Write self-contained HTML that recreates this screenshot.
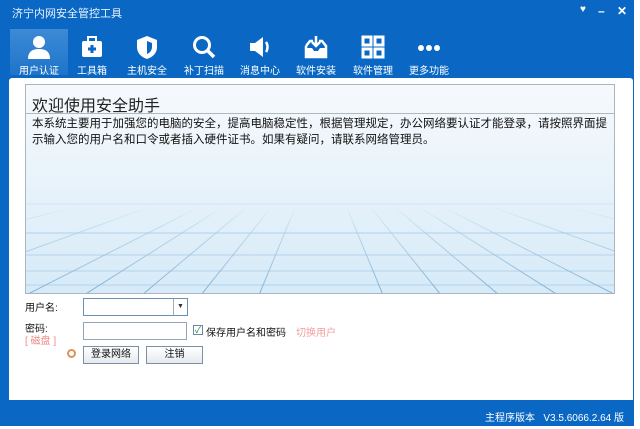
<!DOCTYPE html>
<html><head><meta charset="utf-8"><style>
*{margin:0;padding:0;box-sizing:border-box}
body{width:640px;height:429px;background:#fff;position:relative;overflow:hidden;font-family:"Liberation Sans","Noto Sans CJK SC",sans-serif}
#win{position:absolute;left:0;top:0;width:634px;height:426px;background:#0a68c4}
.title{position:absolute;left:12px;top:5px;color:#e8f2ff;font-size:11px}
.ctl{position:absolute;top:4px;color:#fff;font-size:12px;font-weight:bold}
.tb{position:absolute;top:29px;width:58px;height:46px;text-align:center;color:#fff;font-size:10px}
.tb.act{background:linear-gradient(#3d8ad6,#1e74c9)}
.tb svg{display:block;margin:5px auto 2px;width:26px;height:26px}
#panel{position:absolute;left:9px;top:78px;width:624px;height:322px;background:#fff;border-radius:3px 3px 0 0}
#box{position:absolute;left:25px;top:84px;width:590px;height:210px;border:1px solid #a9b6c4;background:linear-gradient(#f6f9fc 0%,#eaf4fb 40%,#d6eaf8 100%);overflow:hidden}
#box h1{position:absolute;left:6px;top:7px;font-size:16px;font-weight:normal;color:#222;font-family:"Noto Sans CJK SC",sans-serif}
#box .ul{position:absolute;left:0;right:0;top:28px;border-top:1px solid #b0b8c0}
#box p{position:absolute;left:6px;top:30px;width:584px;font-size:11.5px;line-height:16px;color:#111;font-family:"Noto Sans CJK SC",sans-serif;white-space:nowrap}
.lbl{position:absolute;font-size:10px;color:#111}
.inp{position:absolute;background:#fff;border:1px solid #8fa5bd}
.btn{position:absolute;background:linear-gradient(#fff,#e6e9ee);border:1px solid #7f8fa3;font-size:10px;text-align:center;line-height:15px;color:#111}
#status{position:absolute;right:10px;top:409px;color:#fff;font-size:10px}
</style></head><body>
<div id="win">
<div class="title">济宁内网安全管控工具</div>
<div class="ctl" style="left:580px;font-size:10px">♥</div>
<div class="ctl" style="left:598px">–</div>
<div class="ctl" style="left:617px">✕</div>

<div class="tb act" style="left:10px"><svg viewBox="0 0 26 26"><circle cx="13" cy="8" r="6" fill="#fff"/><path d="M2 25c0-8 5-10 11-10s11 2 11 10z" fill="#fff"/></svg>用户认证</div>
<div class="tb" style="left:63px"><svg viewBox="0 0 26 26"><rect x="3" y="7" width="20" height="16" rx="2" fill="#fff"/><rect x="9" y="3" width="8" height="5" fill="none" stroke="#fff" stroke-width="2"/><path d="M13 11v8M9 15h8" stroke="#0a68c4" stroke-width="3"/></svg>工具箱</div>
<div class="tb" style="left:118px"><svg viewBox="0 0 26 26"><path d="M13 2l10 4v7c0 6-4 10-10 12C7 23 3 19 3 13V6z" fill="#fff"/><path d="M13 7l5 2v4c0 3-2 6-5 7z" fill="#0a68c4"/></svg>主机安全</div>
<div class="tb" style="left:175px"><svg viewBox="0 0 26 26"><circle cx="11" cy="11" r="7.5" fill="none" stroke="#fff" stroke-width="3"/><path d="M16 16l7 7" stroke="#fff" stroke-width="3.5"/></svg>补丁扫描</div>
<div class="tb" style="left:231px"><svg viewBox="0 0 26 26"><path d="M3 9h5l8-6v20l-8-6H3z" fill="#fff"/><path d="M19 8c2 3 2 7 0 10" stroke="#fff" stroke-width="2.5" fill="none"/></svg>消息中心</div>
<div class="tb" style="left:287px"><svg viewBox="0 0 26 26"><path d="M3 12v11h20V12l-4-5h-3M10 7H7l-4 5" fill="none" stroke="#fff" stroke-width="2.5"/><path d="M3 14h6l2 3h4l2-3h6v9H3z" fill="#fff"/><path d="M13 2v10M9 8l4 4 4-4" stroke="#fff" stroke-width="2.5" fill="none"/></svg>软件安装</div>
<div class="tb" style="left:344px"><svg viewBox="0 0 26 26"><g fill="none" stroke="#fff" stroke-width="3"><rect x="3" y="3" width="8" height="8"/><rect x="15" y="3" width="8" height="8"/><rect x="3" y="15" width="8" height="8"/><rect x="15" y="15" width="8" height="8"/></g></svg>软件管理</div>
<div class="tb" style="left:400px"><svg viewBox="0 0 26 26"><circle cx="5" cy="14" r="3" fill="#fff"/><circle cx="13" cy="14" r="3" fill="#fff"/><circle cx="21" cy="14" r="3" fill="#fff"/></svg>更多功能</div>

<div id="panel"></div>
<div id="box">
<svg width="590" height="210" style="position:absolute;left:0;top:0" viewBox="0 0 590 210">
<defs><linearGradient id="f" x1="0" y1="0" x2="0" y2="1"><stop offset="0.4" stop-color="#9ec4de" stop-opacity="0"/><stop offset="0.6" stop-color="#9ec4de" stop-opacity="0.6"/><stop offset="1" stop-color="#7fb0d4" stop-opacity="1"/></linearGradient></defs>
<g stroke="#b3d2ea" stroke-width="1">
<line x1="0" y1="119" x2="590" y2="119" stroke="#cfe2f1"/><line x1="0" y1="148" x2="590" y2="148"/><line x1="0" y1="170" x2="590" y2="170"/><line x1="0" y1="186" x2="590" y2="186"/><line x1="0" y1="200" x2="590" y2="200"/>
</g>
<g stroke="url(#f)" stroke-width="1" fill="none">
<line x1="295" y1="60" x2="0" y2="210"/><line x1="295" y1="60" x2="58" y2="210"/><line x1="295" y1="60" x2="116" y2="210"/><line x1="295" y1="60" x2="175" y2="210"/><line x1="295" y1="60" x2="233" y2="210"/><line x1="295" y1="60" x2="-120" y2="210"/><line x1="295" y1="60" x2="-300" y2="210"/>
<line x1="295" y1="60" x2="295" y2="210"/>
<line x1="295" y1="60" x2="357" y2="210"/><line x1="295" y1="60" x2="415" y2="210"/><line x1="295" y1="60" x2="473" y2="210"/><line x1="295" y1="60" x2="532" y2="210"/><line x1="295" y1="60" x2="590" y2="210"/><line x1="295" y1="60" x2="710" y2="210"/><line x1="295" y1="60" x2="890" y2="210"/>
</g></svg>
<h1>欢迎使用安全助手</h1><div class="ul"></div>
<p>本系统主要用于加强您的电脑的安全，提高电脑稳定性，根据管理规定，办公网络要认证才能登录，请按照界面提<br>示输入您的用户名和口令或者插入硬件证书。如果有疑问，请联系网络管理员。</p>
</div>

<div class="lbl" style="left:25px;top:299px">用户名:</div>
<div class="inp" style="left:83px;top:298px;width:105px;height:18px;border-color:#6d8fb5"><div style="position:absolute;right:0;top:0;width:14px;height:16px;border-left:1px solid #aab;font-size:7px;text-align:center;line-height:16px;color:#333">▼</div></div>
<div class="lbl" style="left:25px;top:320px">密码:</div>
<div class="lbl" style="left:25px;top:332px;color:#e88">[ 磁盘 ]</div>
<div class="inp" style="left:83px;top:322px;width:104px;height:18px"></div>
<div style="position:absolute;left:193px;top:325px;width:10px;height:10px;border:1px solid #6a8aa8;background:#fff;font-size:9px;line-height:9px;color:#2a8a2a;text-align:center">✓</div>
<div class="lbl" style="left:206px;top:324px">保存用户名和密码</div>
<div class="lbl" style="left:296px;top:324px;color:#f0a0a0">切换用户</div>
<div style="position:absolute;left:67px;top:349px;width:9px;height:9px;border:2px solid #e0905a;border-radius:50%"></div>
<div class="btn" style="left:83px;top:346px;width:56px;height:18px">登录网络</div>
<div class="btn" style="left:146px;top:346px;width:57px;height:18px">注销</div>

<div id="status">主程序版本 &nbsp; V3.5.6066.2.64 版</div>
</div>
</body></html>
